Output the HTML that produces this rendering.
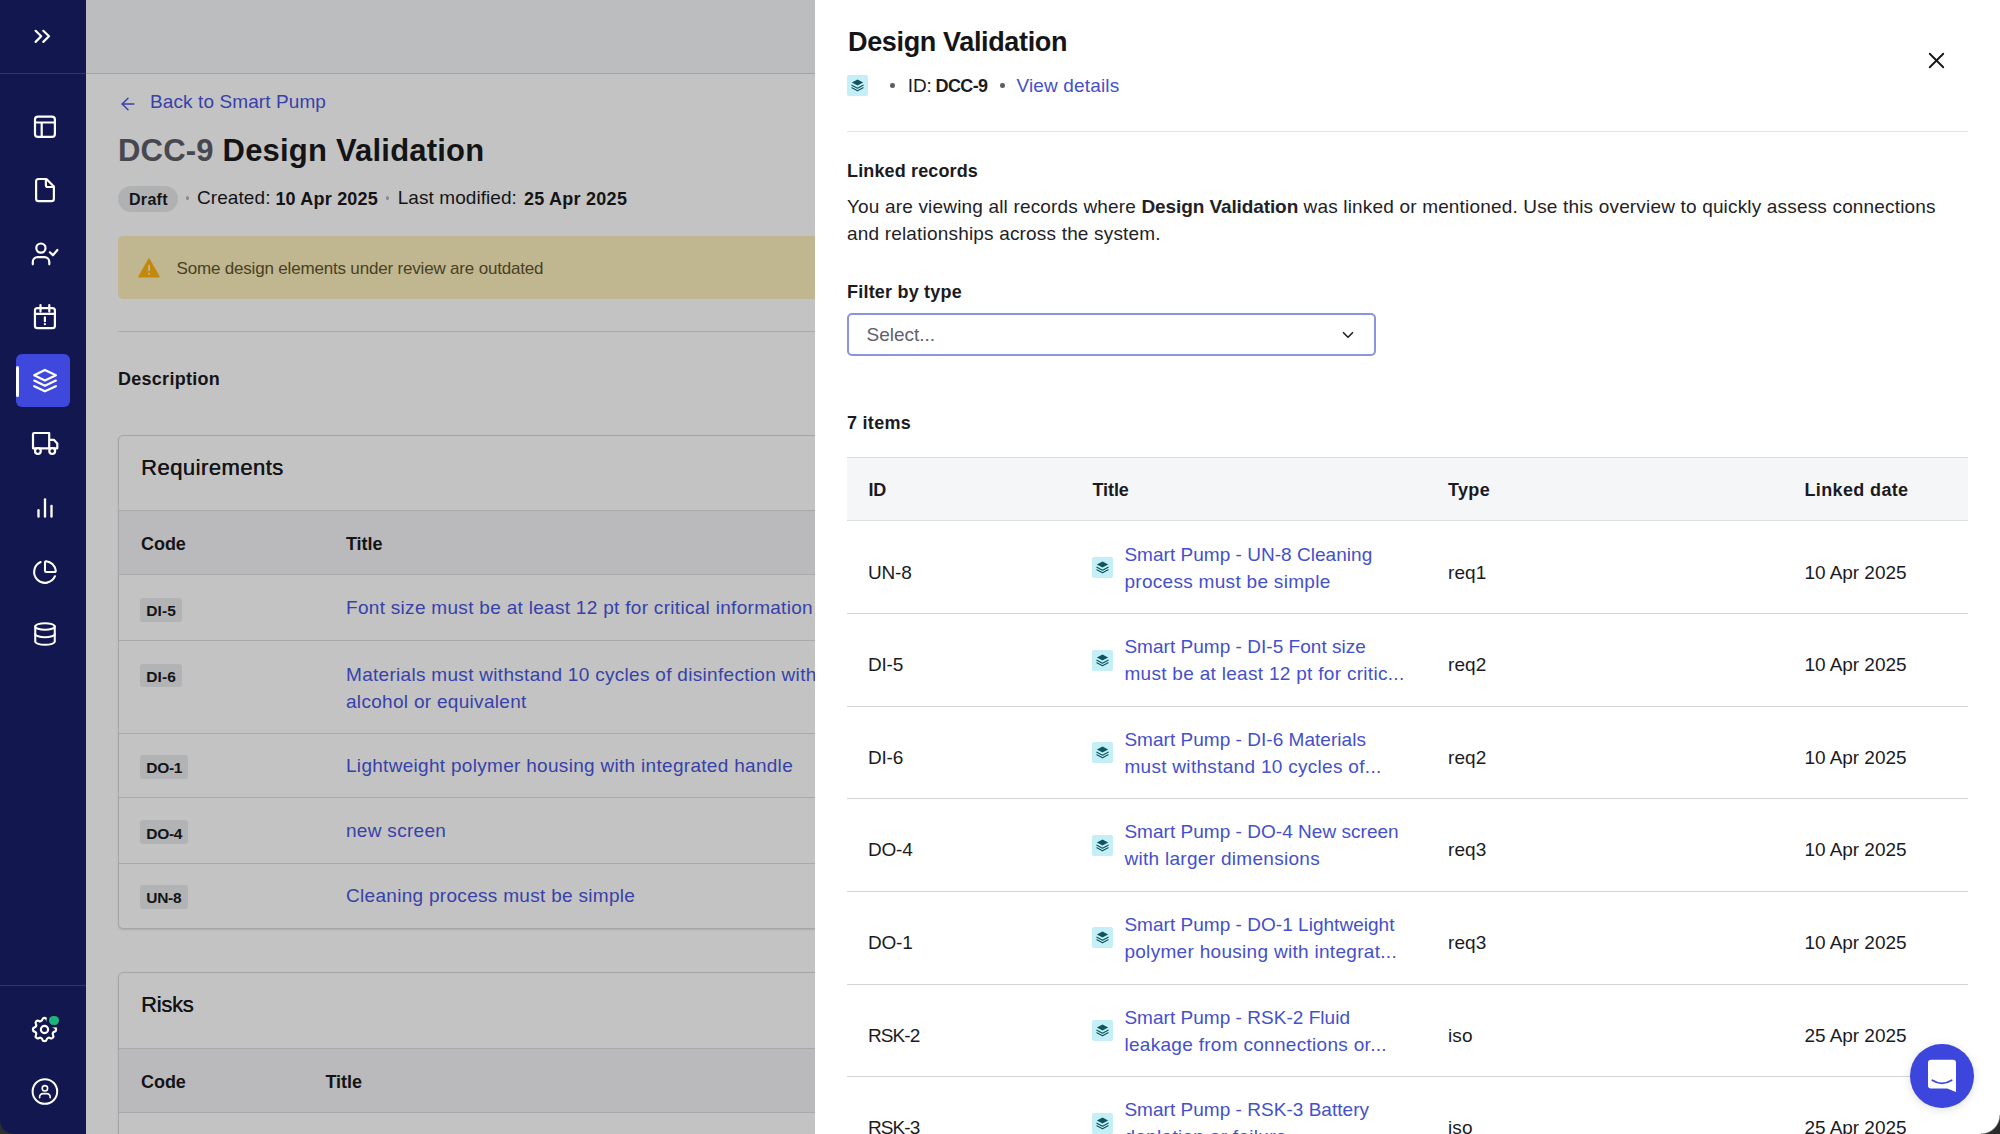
<!DOCTYPE html>
<html><head><meta charset="utf-8"><title>Design Validation</title><style>
html,body{margin:0;padding:0;}
body{width:2000px;height:1134px;overflow:hidden;position:relative;background:#fff;font-family:"Liberation Sans",sans-serif;}
.t{position:absolute;white-space:nowrap;}
.r{position:absolute;}
.ic{position:absolute;overflow:visible;}
#main{position:absolute;left:0;top:0;width:815px;height:1134px;overflow:hidden;background:#fff;}
#ov{position:absolute;left:86px;top:0;width:729px;height:1134px;background:rgba(0,0,0,0.235);}
#panel{position:absolute;left:815px;top:0;width:1185px;height:1134px;overflow:hidden;background:#fff;}
#sb{position:absolute;left:0;top:0;width:86px;height:1134px;overflow:hidden;}
</style></head>
<body>
<div id="main">
<div class="r" style="left:86px;top:0px;width:2000px;height:73px;background:#f6f7f9;"></div>
<div class="r" style="left:86px;top:73px;width:2000px;height:1px;background:#d6d7da;"></div>
<svg class="ic" style="left:118.00px;top:93.50px;" width="20" height="20" viewBox="0 0 24 24" fill="none" stroke="#4a56de" stroke-width="1.75" stroke-linecap="round" stroke-linejoin="round"><path d="m12 19-7-7 7-7"/><path d="M19 12H5"/></svg>
<div class="t" style="left:150px;top:89.72px;font-size:19px;line-height:24px;font-weight:400;color:#4a56de;letter-spacing:0.1px;">Back to Smart Pump</div>
<div class="t" style="left:118px;top:130.76px;font-size:31px;line-height:39px;font-weight:700;color:#1b1b1f;letter-spacing:0.2px;"><span style="color:#5d5d68">DCC-9</span> Design Validation</div>
<div class="r" style="left:118px;top:186px;width:60px;height:26px;background:#e7e8ea;border-radius:13px"></div>
<div class="t" style="left:129px;top:190.26px;font-size:16px;line-height:20px;font-weight:700;color:#1b1b1f;letter-spacing:0.3px;">Draft</div>
<div class="r" style="left:185.7px;top:196.3px;width:3.5px;height:3.5px;background:#b3b4b8;border-radius:50%"></div>
<div class="t" style="left:197px;top:186.42px;font-size:19px;line-height:24px;font-weight:400;color:#1b1b1f;letter-spacing:0.08px;">Created:</div>
<div class="t" style="left:275.4px;top:187.76px;font-size:18px;line-height:22px;font-weight:700;color:#1b1b1f;letter-spacing:0.2px;">10 Apr 2025</div>
<div class="r" style="left:385.7px;top:196.3px;width:3.5px;height:3.5px;background:#b3b4b8;border-radius:50%"></div>
<div class="t" style="left:397.7px;top:186.42px;font-size:19px;line-height:24px;font-weight:400;color:#1b1b1f;letter-spacing:0.07px;">Last modified:</div>
<div class="t" style="left:523.9px;top:187.76px;font-size:18px;line-height:22px;font-weight:700;color:#1b1b1f;letter-spacing:0.26px;">25 Apr 2025</div>
<div class="r" style="left:118px;top:236px;width:1900px;height:63px;background:#fcefbb;border-radius:5px"></div>
<svg class="ic" style="left:138px;top:258px" width="22" height="20" viewBox="0 0 24 22"><path d="M12 1.2 L23 20.6 L1 20.6 Z" fill="#ffb312" stroke="#ffb312" stroke-width="1.6" stroke-linejoin="round"/><rect x="11" y="7.5" width="2.1" height="7" rx="1" fill="#fcefbb"/><circle cx="12.05" cy="17.3" r="1.2" fill="#fcefbb"/></svg>
<div class="t" style="left:176.5px;top:257.61px;font-size:17px;line-height:21px;font-weight:400;color:#5f5530;letter-spacing:-0.18px;">Some design elements under review are outdated</div>
<div class="r" style="left:118px;top:331px;width:1900px;height:1px;background:#dedfe2;"></div>
<div class="t" style="left:118px;top:367.96px;font-size:18px;line-height:22px;font-weight:700;color:#1b1b1f;letter-spacing:0.27px;">Description</div>
<div class="r" style="left:118px;top:434.5px;width:1900px;height:494.5px;background:#ffffff;border:1px solid #d8d9dd;border-radius:5px;box-sizing:border-box;box-shadow:0 1px 2px rgba(0,0,0,0.12)"></div>
<div class="t" style="left:141px;top:453.58px;font-size:22px;line-height:28px;font-weight:400;color:#1b1b1f;letter-spacing:0.47px;text-shadow:0.35px 0 0 #1b1b1f">Requirements</div>
<div class="r" style="left:119px;top:510px;width:1900px;height:65px;background:#f3f4f6;border-top:1px solid #dcdde0;border-bottom:1px solid #dcdde0;box-sizing:border-box"></div>
<div class="t" style="left:141px;top:533.46px;font-size:18px;line-height:22px;font-weight:700;color:#1b1b1f;letter-spacing:-0.05px;">Code</div>
<div class="t" style="left:346px;top:533.46px;font-size:18px;line-height:22px;font-weight:700;color:#1b1b1f;letter-spacing:-0.05px;">Title</div>
<div class="r" style="left:119px;top:640.0px;width:1900px;height:1px;background:#dcdde0;"></div>
<div class="r" style="left:140px;top:598.3px;width:42px;height:23.5px;background:#e9eaec;border-radius:3px"></div>
<div class="t" style="left:146.3px;top:601.43px;font-size:15.5px;line-height:19px;font-weight:700;color:#1b1b1f;letter-spacing:0.08px;">DI-5</div>
<div class="t" style="left:346px;top:596.42px;font-size:19px;line-height:24px;font-weight:400;color:#4a56de;letter-spacing:0.3px;">Font size must be at least 12 pt for critical information</div>
<div class="r" style="left:119px;top:732.5px;width:1900px;height:1px;background:#dcdde0;"></div>
<div class="r" style="left:140px;top:663.5px;width:42px;height:23.5px;background:#e9eaec;border-radius:3px"></div>
<div class="t" style="left:146.3px;top:666.63px;font-size:15.5px;line-height:19px;font-weight:700;color:#1b1b1f;letter-spacing:0.08px;">DI-6</div>
<div class="t" style="left:346px;top:662.72px;font-size:19px;line-height:24px;font-weight:400;color:#4a56de;letter-spacing:0.3px;">Materials must withstand 10 cycles of disinfection with</div>
<div class="t" style="left:346px;top:690.22px;font-size:19px;line-height:24px;font-weight:400;color:#4a56de;letter-spacing:0.3px;">alcohol or equivalent</div>
<div class="r" style="left:119px;top:797.0px;width:1900px;height:1px;background:#dcdde0;"></div>
<div class="r" style="left:140px;top:755px;width:48px;height:23.5px;background:#e9eaec;border-radius:3px"></div>
<div class="t" style="left:146.3px;top:758.13px;font-size:15.5px;line-height:19px;font-weight:700;color:#1b1b1f;letter-spacing:-0.3px;">DO-1</div>
<div class="t" style="left:346px;top:753.92px;font-size:19px;line-height:24px;font-weight:400;color:#4a56de;letter-spacing:0.3px;">Lightweight polymer housing with integrated handle</div>
<div class="r" style="left:119px;top:862.5px;width:1900px;height:1px;background:#dcdde0;"></div>
<div class="r" style="left:140px;top:820.4px;width:48px;height:23.5px;background:#e9eaec;border-radius:3px"></div>
<div class="t" style="left:146.3px;top:823.53px;font-size:15.5px;line-height:19px;font-weight:700;color:#1b1b1f;letter-spacing:-0.3px;">DO-4</div>
<div class="t" style="left:346px;top:818.52px;font-size:19px;line-height:24px;font-weight:400;color:#4a56de;letter-spacing:0.3px;">new screen</div>
<div class="r" style="left:140px;top:885px;width:48px;height:23.5px;background:#e9eaec;border-radius:3px"></div>
<div class="t" style="left:146.3px;top:888.13px;font-size:15.5px;line-height:19px;font-weight:700;color:#1b1b1f;letter-spacing:-0.3px;">UN-8</div>
<div class="t" style="left:346px;top:884.12px;font-size:19px;line-height:24px;font-weight:400;color:#4a56de;letter-spacing:0.3px;">Cleaning process must be simple</div>
<div class="r" style="left:118px;top:972px;width:1900px;height:400px;background:#ffffff;border:1px solid #d8d9dd;border-radius:5px;box-sizing:border-box;box-shadow:0 1px 2px rgba(0,0,0,0.12)"></div>
<div class="t" style="left:141px;top:991.38px;font-size:22px;line-height:28px;font-weight:400;color:#1b1b1f;letter-spacing:-0.3px;text-shadow:0.35px 0 0 #1b1b1f">Risks</div>
<div class="r" style="left:119px;top:1047.5px;width:1900px;height:65.5px;background:#f3f4f6;border-top:1px solid #dcdde0;border-bottom:1px solid #dcdde0;box-sizing:border-box"></div>
<div class="t" style="left:141px;top:1071.26px;font-size:18px;line-height:22px;font-weight:700;color:#1b1b1f;letter-spacing:-0.05px;">Code</div>
<div class="t" style="left:325.5px;top:1071.26px;font-size:18px;line-height:22px;font-weight:700;color:#1b1b1f;letter-spacing:-0.05px;">Title</div>
</div>
<div id="ov"></div>
<div id="panel">
<div style="position:absolute;left:-815px;top:0;width:2000px;height:1134px">
<div class="t" style="left:848px;top:24.64px;font-size:27px;line-height:34px;font-weight:700;color:#151518;letter-spacing:-0.35px;">Design Validation</div>
<div class="r" style="left:847px;top:75px;width:21px;height:21px;background:#c5eff6;border-radius:2px"></div><svg class="ic" style="left:847px;top:75px" width="21" height="21" viewBox="0 0 21 21"><path d="M10.5 4.6 L16.1 7.6 L10.5 10.6 L4.9 7.6 Z" fill="#0d5560"/><path d="M4.9 10.2 L10.5 13.2 L16.1 10.2" fill="none" stroke="#0d5560" stroke-width="1.2" stroke-linejoin="round" stroke-linecap="round"/><path d="M4.9 12.8 L10.5 15.8 L16.1 12.8" fill="none" stroke="#0d5560" stroke-width="1.2" stroke-linejoin="round" stroke-linecap="round"/></svg>
<div class="r" style="left:890.2px;top:83.2px;width:4.6px;height:4.6px;background:#5c5d66;border-radius:50%"></div>
<div class="t" style="left:907.7px;top:73.62px;font-size:19px;line-height:24px;font-weight:400;color:#1b1b1f;letter-spacing:-0.05px;">ID:</div>
<div class="t" style="left:935.5px;top:74.96px;font-size:18px;line-height:22px;font-weight:700;color:#1b1b1f;letter-spacing:-0.62px;">DCC-9</div>
<div class="r" style="left:1000.2px;top:83.2px;width:4.6px;height:4.6px;background:#5c5d66;border-radius:50%"></div>
<div class="t" style="left:1016.5px;top:73.62px;font-size:19px;line-height:24px;font-weight:400;color:#4450cc;letter-spacing:0.15px;">View details</div>
<svg class="ic" style="left:1922.90px;top:46.50px;" width="27" height="27" viewBox="0 0 24 24" fill="none" stroke="#151518" stroke-width="1.6" stroke-linecap="round" stroke-linejoin="round"><path d="M18 6 6 18"/><path d="m6 6 12 12"/></svg>
<div class="r" style="left:847px;top:131px;width:1121px;height:1px;background:#e3e4e7;"></div>
<div class="t" style="left:847px;top:159.76px;font-size:18px;line-height:22px;font-weight:700;color:#1b1b1f;letter-spacing:0.14px;">Linked records</div>
<div class="t" style="left:847px;top:194.82px;font-size:19px;line-height:24px;font-weight:400;color:#222226;letter-spacing:0.17px;">You are viewing all records where <b style="font-weight:700;letter-spacing:-0.1px">Design Validation</b> was linked or mentioned. Use this overview to quickly assess connections</div>
<div class="t" style="left:847px;top:222.42px;font-size:19px;line-height:24px;font-weight:400;color:#222226;letter-spacing:0.18px;">and relationships across the system.</div>
<div class="t" style="left:847px;top:281.06px;font-size:18px;line-height:22px;font-weight:700;color:#1b1b1f;letter-spacing:0.21px;">Filter by type</div>
<div class="r" style="left:847px;top:313px;width:528.6px;height:42.5px;background:#fff;border:2px solid #8c94e2;border-radius:5px;box-sizing:border-box"></div>
<div class="t" style="left:866.5px;top:323.42px;font-size:19px;line-height:24px;font-weight:400;color:#5f6068;letter-spacing:0.0px;">Select...</div>
<svg class="ic" style="left:1339.00px;top:325.50px;" width="18" height="18" viewBox="0 0 24 24" fill="none" stroke="#222" stroke-width="2.2" stroke-linecap="round" stroke-linejoin="round"><path d="m6 9 6 6 6-6"/></svg>
<div class="t" style="left:847px;top:411.76px;font-size:18px;line-height:22px;font-weight:700;color:#1b1b1f;letter-spacing:0.28px;">7 items</div>
<div class="r" style="left:847px;top:456.5px;width:1121px;height:64.5px;background:#f5f6f8;border-top:1.5px solid #dcdde1;border-bottom:1.5px solid #dcdde1;box-sizing:border-box"></div>
<div class="t" style="left:868.4px;top:479.16px;font-size:18px;line-height:22px;font-weight:700;color:#1b1b1f;letter-spacing:-0.25px;">ID</div>
<div class="t" style="left:1092.4px;top:479.16px;font-size:18px;line-height:22px;font-weight:700;color:#1b1b1f;letter-spacing:-0.05px;">Title</div>
<div class="t" style="left:1448px;top:479.16px;font-size:18px;line-height:22px;font-weight:700;color:#1b1b1f;letter-spacing:0.33px;">Type</div>
<div class="t" style="left:1804.5px;top:479.16px;font-size:18px;line-height:22px;font-weight:700;color:#1b1b1f;letter-spacing:0.36px;">Linked date</div>
<div class="r" style="left:847px;top:613px;width:1121px;height:1px;background:#d4d5d9;"></div>
<div class="t" style="left:868px;top:560.62px;font-size:19px;line-height:24px;font-weight:400;color:#1b1b1f;letter-spacing:-0.2px;">UN-8</div>
<div class="r" style="left:1092px;top:557.0px;width:21px;height:21px;background:#c5eff6;border-radius:2px"></div><svg class="ic" style="left:1092px;top:557.0px" width="21" height="21" viewBox="0 0 21 21"><path d="M10.5 4.6 L16.1 7.6 L10.5 10.6 L4.9 7.6 Z" fill="#0d5560"/><path d="M4.9 10.2 L10.5 13.2 L16.1 10.2" fill="none" stroke="#0d5560" stroke-width="1.2" stroke-linejoin="round" stroke-linecap="round"/><path d="M4.9 12.8 L10.5 15.8 L16.1 12.8" fill="none" stroke="#0d5560" stroke-width="1.2" stroke-linejoin="round" stroke-linecap="round"/></svg>
<div class="t" style="left:1124.4px;top:542.62px;font-size:19px;line-height:24px;font-weight:400;color:#4450cc;letter-spacing:0.03px;">Smart Pump - UN-8 Cleaning</div>
<div class="t" style="left:1124.4px;top:569.62px;font-size:19px;line-height:24px;font-weight:400;color:#4450cc;letter-spacing:0.3px;">process must be simple</div>
<div class="t" style="left:1448px;top:560.62px;font-size:19px;line-height:24px;font-weight:400;color:#1b1b1f;letter-spacing:0.1px;">req1</div>
<div class="t" style="left:1804.5px;top:560.62px;font-size:19px;line-height:24px;font-weight:400;color:#1b1b1f;letter-spacing:-0.05px;">10 Apr 2025</div>
<div class="r" style="left:847px;top:706px;width:1121px;height:1px;background:#d4d5d9;"></div>
<div class="t" style="left:868px;top:653.22px;font-size:19px;line-height:24px;font-weight:400;color:#1b1b1f;letter-spacing:-0.2px;">DI-5</div>
<div class="r" style="left:1092px;top:649.6px;width:21px;height:21px;background:#c5eff6;border-radius:2px"></div><svg class="ic" style="left:1092px;top:649.6px" width="21" height="21" viewBox="0 0 21 21"><path d="M10.5 4.6 L16.1 7.6 L10.5 10.6 L4.9 7.6 Z" fill="#0d5560"/><path d="M4.9 10.2 L10.5 13.2 L16.1 10.2" fill="none" stroke="#0d5560" stroke-width="1.2" stroke-linejoin="round" stroke-linecap="round"/><path d="M4.9 12.8 L10.5 15.8 L16.1 12.8" fill="none" stroke="#0d5560" stroke-width="1.2" stroke-linejoin="round" stroke-linecap="round"/></svg>
<div class="t" style="left:1124.4px;top:635.22px;font-size:19px;line-height:24px;font-weight:400;color:#4450cc;letter-spacing:0.03px;">Smart Pump - DI-5 Font size</div>
<div class="t" style="left:1124.4px;top:662.22px;font-size:19px;line-height:24px;font-weight:400;color:#4450cc;letter-spacing:0.3px;">must be at least 12 pt for critic...</div>
<div class="t" style="left:1448px;top:653.22px;font-size:19px;line-height:24px;font-weight:400;color:#1b1b1f;letter-spacing:0.1px;">req2</div>
<div class="t" style="left:1804.5px;top:653.22px;font-size:19px;line-height:24px;font-weight:400;color:#1b1b1f;letter-spacing:-0.05px;">10 Apr 2025</div>
<div class="r" style="left:847px;top:798px;width:1121px;height:1px;background:#d4d5d9;"></div>
<div class="t" style="left:868px;top:745.82px;font-size:19px;line-height:24px;font-weight:400;color:#1b1b1f;letter-spacing:-0.2px;">DI-6</div>
<div class="r" style="left:1092px;top:742.2px;width:21px;height:21px;background:#c5eff6;border-radius:2px"></div><svg class="ic" style="left:1092px;top:742.2px" width="21" height="21" viewBox="0 0 21 21"><path d="M10.5 4.6 L16.1 7.6 L10.5 10.6 L4.9 7.6 Z" fill="#0d5560"/><path d="M4.9 10.2 L10.5 13.2 L16.1 10.2" fill="none" stroke="#0d5560" stroke-width="1.2" stroke-linejoin="round" stroke-linecap="round"/><path d="M4.9 12.8 L10.5 15.8 L16.1 12.8" fill="none" stroke="#0d5560" stroke-width="1.2" stroke-linejoin="round" stroke-linecap="round"/></svg>
<div class="t" style="left:1124.4px;top:727.82px;font-size:19px;line-height:24px;font-weight:400;color:#4450cc;letter-spacing:0.03px;">Smart Pump - DI-6 Materials</div>
<div class="t" style="left:1124.4px;top:754.82px;font-size:19px;line-height:24px;font-weight:400;color:#4450cc;letter-spacing:0.3px;">must withstand 10 cycles of...</div>
<div class="t" style="left:1448px;top:745.82px;font-size:19px;line-height:24px;font-weight:400;color:#1b1b1f;letter-spacing:0.1px;">req2</div>
<div class="t" style="left:1804.5px;top:745.82px;font-size:19px;line-height:24px;font-weight:400;color:#1b1b1f;letter-spacing:-0.05px;">10 Apr 2025</div>
<div class="r" style="left:847px;top:891px;width:1121px;height:1px;background:#d4d5d9;"></div>
<div class="t" style="left:868px;top:838.42px;font-size:19px;line-height:24px;font-weight:400;color:#1b1b1f;letter-spacing:-0.2px;">DO-4</div>
<div class="r" style="left:1092px;top:834.8px;width:21px;height:21px;background:#c5eff6;border-radius:2px"></div><svg class="ic" style="left:1092px;top:834.8px" width="21" height="21" viewBox="0 0 21 21"><path d="M10.5 4.6 L16.1 7.6 L10.5 10.6 L4.9 7.6 Z" fill="#0d5560"/><path d="M4.9 10.2 L10.5 13.2 L16.1 10.2" fill="none" stroke="#0d5560" stroke-width="1.2" stroke-linejoin="round" stroke-linecap="round"/><path d="M4.9 12.8 L10.5 15.8 L16.1 12.8" fill="none" stroke="#0d5560" stroke-width="1.2" stroke-linejoin="round" stroke-linecap="round"/></svg>
<div class="t" style="left:1124.4px;top:820.42px;font-size:19px;line-height:24px;font-weight:400;color:#4450cc;letter-spacing:0.03px;">Smart Pump - DO-4 New screen</div>
<div class="t" style="left:1124.4px;top:847.42px;font-size:19px;line-height:24px;font-weight:400;color:#4450cc;letter-spacing:0.3px;">with larger dimensions</div>
<div class="t" style="left:1448px;top:838.42px;font-size:19px;line-height:24px;font-weight:400;color:#1b1b1f;letter-spacing:0.1px;">req3</div>
<div class="t" style="left:1804.5px;top:838.42px;font-size:19px;line-height:24px;font-weight:400;color:#1b1b1f;letter-spacing:-0.05px;">10 Apr 2025</div>
<div class="r" style="left:847px;top:984px;width:1121px;height:1px;background:#d4d5d9;"></div>
<div class="t" style="left:868px;top:931.02px;font-size:19px;line-height:24px;font-weight:400;color:#1b1b1f;letter-spacing:-0.2px;">DO-1</div>
<div class="r" style="left:1092px;top:927.4px;width:21px;height:21px;background:#c5eff6;border-radius:2px"></div><svg class="ic" style="left:1092px;top:927.4px" width="21" height="21" viewBox="0 0 21 21"><path d="M10.5 4.6 L16.1 7.6 L10.5 10.6 L4.9 7.6 Z" fill="#0d5560"/><path d="M4.9 10.2 L10.5 13.2 L16.1 10.2" fill="none" stroke="#0d5560" stroke-width="1.2" stroke-linejoin="round" stroke-linecap="round"/><path d="M4.9 12.8 L10.5 15.8 L16.1 12.8" fill="none" stroke="#0d5560" stroke-width="1.2" stroke-linejoin="round" stroke-linecap="round"/></svg>
<div class="t" style="left:1124.4px;top:913.02px;font-size:19px;line-height:24px;font-weight:400;color:#4450cc;letter-spacing:0.03px;">Smart Pump - DO-1 Lightweight</div>
<div class="t" style="left:1124.4px;top:940.02px;font-size:19px;line-height:24px;font-weight:400;color:#4450cc;letter-spacing:0.3px;">polymer housing with integrat...</div>
<div class="t" style="left:1448px;top:931.02px;font-size:19px;line-height:24px;font-weight:400;color:#1b1b1f;letter-spacing:0.1px;">req3</div>
<div class="t" style="left:1804.5px;top:931.02px;font-size:19px;line-height:24px;font-weight:400;color:#1b1b1f;letter-spacing:-0.05px;">10 Apr 2025</div>
<div class="r" style="left:847px;top:1076px;width:1121px;height:1px;background:#d4d5d9;"></div>
<div class="t" style="left:868px;top:1023.62px;font-size:19px;line-height:24px;font-weight:400;color:#1b1b1f;letter-spacing:-0.9px;">RSK-2</div>
<div class="r" style="left:1092px;top:1020.0px;width:21px;height:21px;background:#c5eff6;border-radius:2px"></div><svg class="ic" style="left:1092px;top:1020.0px" width="21" height="21" viewBox="0 0 21 21"><path d="M10.5 4.6 L16.1 7.6 L10.5 10.6 L4.9 7.6 Z" fill="#0d5560"/><path d="M4.9 10.2 L10.5 13.2 L16.1 10.2" fill="none" stroke="#0d5560" stroke-width="1.2" stroke-linejoin="round" stroke-linecap="round"/><path d="M4.9 12.8 L10.5 15.8 L16.1 12.8" fill="none" stroke="#0d5560" stroke-width="1.2" stroke-linejoin="round" stroke-linecap="round"/></svg>
<div class="t" style="left:1124.4px;top:1005.62px;font-size:19px;line-height:24px;font-weight:400;color:#4450cc;letter-spacing:0.03px;">Smart Pump - RSK-2 Fluid</div>
<div class="t" style="left:1124.4px;top:1032.62px;font-size:19px;line-height:24px;font-weight:400;color:#4450cc;letter-spacing:0.3px;">leakage from connections or...</div>
<div class="t" style="left:1448px;top:1023.62px;font-size:19px;line-height:24px;font-weight:400;color:#1b1b1f;letter-spacing:0.1px;">iso</div>
<div class="t" style="left:1804.5px;top:1023.62px;font-size:19px;line-height:24px;font-weight:400;color:#1b1b1f;letter-spacing:-0.05px;">25 Apr 2025</div>
<div class="r" style="left:847px;top:1169px;width:1121px;height:1px;background:#d4d5d9;"></div>
<div class="t" style="left:868px;top:1116.22px;font-size:19px;line-height:24px;font-weight:400;color:#1b1b1f;letter-spacing:-0.9px;">RSK-3</div>
<div class="r" style="left:1092px;top:1112.6px;width:21px;height:21px;background:#c5eff6;border-radius:2px"></div><svg class="ic" style="left:1092px;top:1112.6px" width="21" height="21" viewBox="0 0 21 21"><path d="M10.5 4.6 L16.1 7.6 L10.5 10.6 L4.9 7.6 Z" fill="#0d5560"/><path d="M4.9 10.2 L10.5 13.2 L16.1 10.2" fill="none" stroke="#0d5560" stroke-width="1.2" stroke-linejoin="round" stroke-linecap="round"/><path d="M4.9 12.8 L10.5 15.8 L16.1 12.8" fill="none" stroke="#0d5560" stroke-width="1.2" stroke-linejoin="round" stroke-linecap="round"/></svg>
<div class="t" style="left:1124.4px;top:1098.22px;font-size:19px;line-height:24px;font-weight:400;color:#4450cc;letter-spacing:0.03px;">Smart Pump - RSK-3 Battery</div>
<div class="t" style="left:1124.4px;top:1125.22px;font-size:19px;line-height:24px;font-weight:400;color:#4450cc;letter-spacing:0.3px;">depletion or failure...</div>
<div class="t" style="left:1448px;top:1116.22px;font-size:19px;line-height:24px;font-weight:400;color:#1b1b1f;letter-spacing:0.1px;">iso</div>
<div class="t" style="left:1804.5px;top:1116.22px;font-size:19px;line-height:24px;font-weight:400;color:#1b1b1f;letter-spacing:-0.05px;">25 Apr 2025</div>
<div class="r" style="left:1910px;top:1044px;width:63.5px;height:63.5px;border-radius:50%;background:#3c46dc;box-shadow:0 2px 10px rgba(0,0,0,0.12)"></div><svg class="ic" style="left:1910px;top:1044px" width="63" height="63" viewBox="0 0 63 63"><path d="M21 15.7 h22 a3 3 0 0 1 3 3 V48 l-8.8 -3.6 H21 a3 3 0 0 1 -3 -3 V18.7 a3 3 0 0 1 3 -3 z" fill="#fff"/><path d="M22.3 36.2 Q32 42.4 41.7 36.2" fill="none" stroke="#3c46dc" stroke-width="1.7" stroke-linecap="round"/></svg>
</div>
</div>
<div id="sb">
<div class="r" style="left:0px;top:0px;width:86px;height:1134px;background:#12174f;"></div>
<div class="r" style="left:0px;top:73px;width:86px;height:1px;background:#2e3470;"></div>
<div class="r" style="left:0px;top:984.5px;width:86px;height:1px;background:#2e3470;"></div>
<div class="r" style="left:16px;top:354px;width:54px;height:53px;background:#3f48dc;border-radius:6px"></div>
<div class="r" style="left:16px;top:366px;width:3px;height:31px;background:#ffffff;border-radius:2px"></div>
<svg class="ic" style="left:0;top:0" width="86" height="1134" viewBox="0 0 86 1134"><g fill="none" stroke="#fff" stroke-width="2.2" stroke-linecap="round" stroke-linejoin="round"><polyline points="35.6,30.8 41.2,36.3 35.6,41.9"/><polyline points="43.3,30.8 49,36.3 43.3,41.9"/><rect x="35" y="116.6" width="19.9" height="20.3" rx="3"/><path d="M35 122.5H54.9M41.7 122.5V136.9"/><path d="M46.4 179 H38.5 a2.4 2.4 0 0 0 -2.4 2.4 V198.8 a2.4 2.4 0 0 0 2.4 2.4 H51.5 a2.4 2.4 0 0 0 2.4 -2.4 V186.5 Z"/><path d="M45.9 179.3 V185.3 a1.7 1.7 0 0 0 1.7 1.7 H53.6"/><circle cx="40.9" cy="248.1" r="4.6"/><path d="M32.8 264.3 V262 a4.8 4.8 0 0 1 4.8 -4.8 H44.5 a4.8 4.8 0 0 1 4.8 4.8 V264.3"/><polyline points="49.9,252.3 52.9,255.3 57.4,250"/><rect x="34.95" y="308.1" width="19.95" height="20.1" rx="2.5"/><path d="M34.95 313.9H54.9M40.5 305.1V311.5M49.3 305.1V311.5M44.9 317.3V321.2M44.9 324.1v0.1"/><path d="M34.2 375.3 L44.9 369.9 L55.9 375.3 L44.9 380.4 Z"/><polyline points="34.2,380.6 44.9,385.7 55.9,380.6"/><polyline points="34.2,386.2 44.9,391.3 55.9,386.2"/><path d="M33 448.3 V434.2 a1.2 1.2 0 0 1 1.2 -1.2 H49.2 V448.3 M33 448.3 H57.3 V443.6 L53.8 439.8 H49.2"/><circle cx="37.9" cy="451.1" r="2.9" fill="#12174f"/><circle cx="52.2" cy="451.1" r="2.9" fill="#12174f"/><circle cx="44.9" cy="1091.5" r="12.3" stroke-width="2"/><circle cx="44.9" cy="1088.3" r="2.7" stroke-width="1.6"/><path d="M39.6 1097.8 V1097 a3.4 3.4 0 0 1 3.4 -3.4 h3.8 a3.4 3.4 0 0 1 3.4 3.4 v0.8" stroke-width="1.6"/></g></svg>
<svg class="ic" style="left:32.00px;top:495.10px;" width="26" height="26" viewBox="0 0 24 24" fill="none" stroke="#fff" stroke-width="2.15" stroke-linecap="round" stroke-linejoin="round"><line x1="18" x2="18" y1="20" y2="10"/><line x1="12" x2="12" y1="20" y2="4"/><line x1="6" x2="6" y1="20" y2="14"/></svg>
<svg class="ic" style="left:32.00px;top:558.50px;" width="26" height="26" viewBox="0 0 24 24" fill="none" stroke="#fff" stroke-width="1.9" stroke-linecap="round" stroke-linejoin="round"><path d="M21 12c.552 0 1.005-.449.95-.998a10 10 0 0 0-8.953-8.951c-.55-.055-.998.398-.998.95v8a1 1 0 0 0 1 1z"/><path d="M21.21 15.89A10 10 0 1 1 8 2.83"/></svg>
<svg class="ic" style="left:32.00px;top:621.00px;" width="26" height="26" viewBox="0 0 24 24" fill="none" stroke="#fff" stroke-width="1.9" stroke-linecap="round" stroke-linejoin="round"><ellipse cx="12" cy="5" rx="9" ry="3"/><path d="M3 5V19A9 3 0 0 0 21 19V5"/><path d="M3 12A9 3 0 0 0 21 12"/></svg>
<svg class="ic" style="left:29.40px;top:1014.10px;" width="31" height="31" viewBox="0 0 24 24" fill="none" stroke="#fff" stroke-width="1.7" stroke-linecap="round" stroke-linejoin="round"><path d="M10.325 4.317c.426 -1.756 2.924 -1.756 3.35 0a1.724 1.724 0 0 0 2.573 1.066c1.543 -.94 3.31 .826 2.37 2.37a1.724 1.724 0 0 0 1.065 2.572c1.756 .426 1.756 2.924 0 3.35a1.724 1.724 0 0 0 -1.066 2.573c.94 1.543 -.826 3.31 -2.37 2.37a1.724 1.724 0 0 0 -2.572 1.065c-.426 1.756 -2.924 1.756 -3.35 0a1.724 1.724 0 0 0 -2.573 -1.066c-1.543 .94 -3.31 -.826 -2.37 -2.37a1.724 1.724 0 0 0 -1.065 -2.572c-1.756 -.426 -1.756 -2.924 0 -3.35a1.724 1.724 0 0 0 1.066 -2.573c-.94 -1.543 .826 -3.31 2.37 -2.37c1 .608 2.296 .07 2.572 -1.065z"/><circle cx="12" cy="12" r="2.8"/></svg>
<div class="r" style="left:48.8px;top:1015.7px;width:9.8px;height:9.8px;background:#1db57a;border-radius:50%;box-shadow:0 0 0 2.6px #12174f"></div>
</div>
<div class="r" style="left:0;top:1121px;width:13px;height:13px;background:radial-gradient(circle at 100% 0,transparent 12px,#2b302f 13.5px)"></div>
<div class="r" style="left:1981px;top:1115px;width:19px;height:19px;background:radial-gradient(circle at 0 0,transparent 18px,#2a2a2a 19.5px)"></div>
</body></html>
